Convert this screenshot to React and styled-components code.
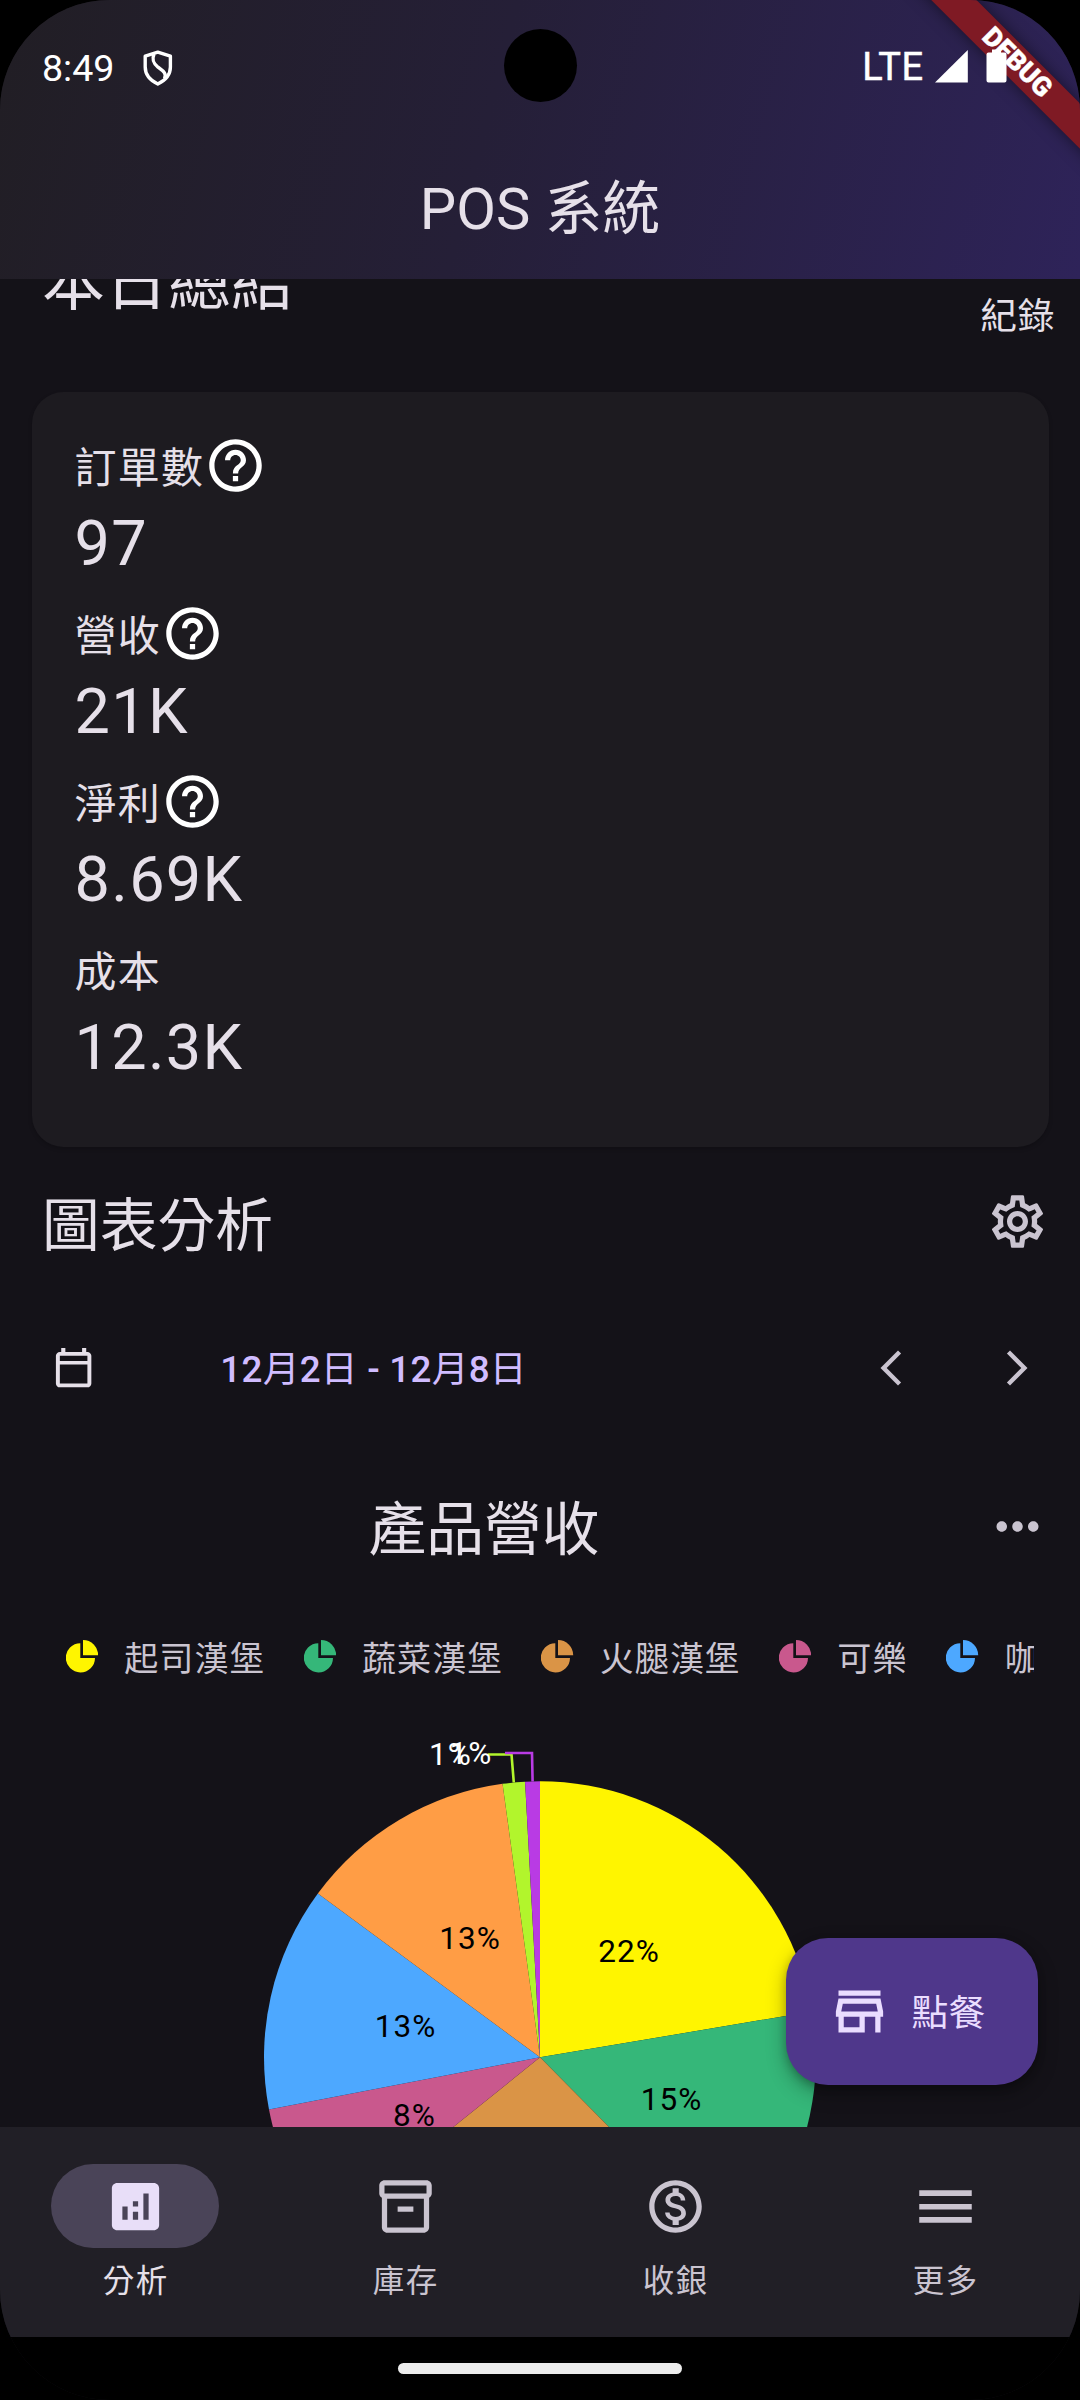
import React from "react";
import styled, { createGlobalStyle, css } from "styled-components";
import {
  MdHelpOutline,
  MdOutlineSettings,
  MdMoreHoriz,
  MdAnalytics,
  MdOutlineInventory2,
  MdOutlineMonetizationOn,
} from "react-icons/md";

const FONT = `Roboto, "Noto Sans CJK TC", sans-serif`;

const GlobalStyle = createGlobalStyle`
  html, body { margin: 0; padding: 0; background: #000; }
  * { box-sizing: border-box; }
  svg { display: block; flex-shrink: 0; }
`;

const Screen = styled.div`
  position: relative;
  display: flex;
  flex-direction: column;
  width: 1080px;
  height: 2400px;
  overflow: hidden;
  border-radius: 110px;
  background: #141218;
  color: #e6e0e9;
  font-family: ${FONT};
  font-weight: 400;
`;

const Header = styled.header`
  display: flex;
  flex-direction: column;
  flex: none;
  height: 279px;
  background: linear-gradient(104.5deg, #211e24 0%, #251f37 45%, #2e2359 100%);
`;

const StatusBar = styled.div`
  position: relative;
  z-index: 3;
  display: flex;
  justify-content: space-between;
  height: 136px;
  padding: 0 73.5px 0 42px;
  color: #fff;
`;

const StatusGroup = styled.div`
  display: flex;
  align-items: flex-start;
`;

const Clock = styled.span`
  padding-top: 45.5px;
  margin-right: 27.5px;
  font-size: 37.6px;
  line-height: 44px;
`;

const ShieldIcon = styled.svg`
  width: 32px;
  height: 38px;
  margin-top: 48.5px;
`;

const Network = styled.span`
  padding-top: 44.5px;
  margin-right: 11px;
  font-size: 38px;
  font-weight: 400;
  line-height: 44px;
  letter-spacing: 0.5px;
  -webkit-text-stroke: 0.5px #fff;
`;

const SignalIcon = styled.svg`
  width: 33px;
  height: 33px;
  margin: 49.5px 18px 0 0;
`;

const BatteryIcon = styled.svg`
  width: 21px;
  height: 34px;
  margin-top: 49px;
`;

const AppTitle = styled.h1`
  margin: 0;
  padding-top: 8px;
  font-size: 57.75px;
  font-weight: 400;
  line-height: 130px;
  text-align: center;
`;

const Cutout = styled.div`
  position: absolute;
  z-index: 4;
  top: 29px;
  left: 503.5px;
  width: 73px;
  height: 73px;
  border-radius: 50%;
  background: #000;
`;

const DebugBanner = styled.div`
  position: absolute;
  z-index: 2;
  top: 47.4px;
  left: 816.9px;
  width: 400px;
  height: 31.5px;
  transform: rotate(45deg);
  background: #7f1a24;
  box-shadow: 0 0 16px rgba(0, 0, 0, 0.5);
  color: #fff;
  font-size: 26.8px;
  font-weight: 900;
  line-height: 31.5px;
  text-align: center;
  -webkit-text-stroke: 0.4px #fff;
`;

const Content = styled.main`
  flex: none;
  height: 1848px;
  overflow: hidden;
`;

const SummaryHead = styled.div`
  display: flex;
  justify-content: space-between;
  height: 154.5px;
  margin-top: -42px;
  padding: 0 25px 0 42px;
`;

const SummaryTitle = styled.h2`
  margin: 0;
  font-size: 63px;
  font-weight: 400;
  line-height: 91px;
`;

const RecordsLink = styled.span`
  margin-top: 55px;
  font-size: 36.75px;
  line-height: 50px;
  letter-spacing: 0.6px;
`;

const Card = styled.section`
  height: 755.5px;
  margin: 0 31.5px;
  padding: 42.5px 42px 0 43px;
  border-radius: 31.5px;
  background: #1d1b20;
  box-shadow: 0 2px 4px rgba(0, 0, 0, 0.2);
`;

const Metric = styled.div`
  height: 168px;
`;

const MetricLabel = styled.div`
  display: flex;
  align-items: center;
  height: 63px;
  font-size: 42px;
  letter-spacing: 1.31px;

  span {
    padding-top: 7px;
    line-height: 54px;
  }
  svg {
    color: #fff;
  }
`;

const MetricValue = styled.div`
  margin-top: 5px;
  font-size: 63px;
  line-height: 84px;
  letter-spacing: 1.31px;
`;

const AnalysisHead = styled.div`
  display: flex;
  align-items: center;
  justify-content: space-between;
  height: 149px;
  padding: 0 31.5px 0 42px;

  > svg {
    color: #cac4d0;
  }
`;

const SectionTitle = styled.h2`
  margin: 0;
  padding-top: 9px;
  font-size: 57.75px;
  font-weight: 400;
  line-height: 76px;
`;

const DateRow = styled.div`
  display: flex;
  align-items: center;
  height: 144px;
  padding-left: 49.9px;
`;

const DateRange = styled.span`
  flex: 1;
  margin-left: 123.2px;
  padding-top: 3px;
  color: #d0bcff;
  font-size: 36.75px;
  font-weight: 500;
  line-height: 52px;
  letter-spacing: 0.26px;
`;

const DateUnit = styled.span`
  font-weight: 400;
`;

const IconButton = styled.span`
  display: flex;
  flex: none;
  align-items: center;
  justify-content: center;
  width: 126px;
  height: 126px;
  color: #cac4d0;
`;

const ChartHead = styled.div`
  display: flex;
  align-items: center;
  height: 173px;
`;

const ChartTitle = styled(SectionTitle)`
  flex: 1;
  padding: 6px 0 0 14px;
  text-align: center;
`;

const Legend = styled.div`
  display: flex;
  align-items: center;
  gap: 38.7px;
  height: 87px;
  margin: 0 46px;
  padding-left: 19.8px;
  overflow: hidden;
`;

const LegendItem = styled.div`
  display: flex;
  flex: none;
  align-items: center;
  gap: 26.1px;
  color: #cac4d0;
  font-size: 34.125px;
  letter-spacing: 1.05px;
  white-space: nowrap;

  span {
    padding-top: 4px;
    line-height: 50px;
  }
`;

const ChartCanvas = styled.svg`
  width: 1080px;
  height: 427px;
`;

const SliceLabel = styled.text`
  fill: ${(p) => (p.$outside ? "#fff" : "#000")};
  font-family: ${FONT};
  font-size: 31.5px;
  letter-spacing: 1.05px;
  text-anchor: middle;
`;

const OrderButton = styled.button`
  position: absolute;
  top: 1938px;
  left: 785.5px;
  display: flex;
  align-items: center;
  gap: 21px;
  width: 252.5px;
  height: 147px;
  padding: 0 0 0 42px;
  border: 0;
  border-radius: 42px;
  background: #4f378b;
  box-shadow: 0 8px 20px rgba(0, 0, 0, 0.3), 0 3px 8px rgba(0, 0, 0, 0.2);
  color: #eaddff;
  font-family: ${FONT};
  font-size: 36.75px;
  font-weight: 400;
  letter-spacing: 0.3px;

  span {
    padding-top: 5px;
    line-height: 50px;
  }
`;

const NavBar = styled.nav`
  display: flex;
  flex: none;
  height: 210px;
  background: #211f26;
`;

const NavItem = styled.div`
  display: flex;
  flex: 1;
  flex-direction: column;
  align-items: center;
  padding-top: 37px;
  color: ${(p) => (p.$active ? "#e6e0e9" : "#cac4d0")};
  font-size: 31.5px;
  line-height: 44px;
  letter-spacing: 1.31px;

  > span {
    padding-left: 1.3px;
  }
`;

const NavPill = styled.div`
  display: flex;
  align-items: center;
  justify-content: center;
  width: 168px;
  height: 84px;
  margin-bottom: 12px;
  border-radius: 42px;
  ${(p) =>
    p.$active &&
    css`
      background: #4a4458;
      color: #e8def8;
    `}
`;

const GestureArea = styled.div`
  display: flex;
  flex: none;
  align-items: center;
  justify-content: center;
  height: 63px;
  background: #000;
`;

const GestureHandle = styled.div`
  width: 284px;
  height: 11px;
  border-radius: 6px;
  background: #ececec;
`;

const CalendarIcon = () => (
  <svg width="47.25" height="47.25" viewBox="0 0 24 24" fill="currentColor" fillRule="evenodd">
    <path d="M18.4 4V2h-2.1v2H7.8V2H5.7v2H5c-1.1 0-2 .9-2 2v14c0 1.1.9 2 2 2h14c1.1 0 2-.9 2-2V6c0-1.1-.9-2-2-2zM5 6h14v2.6H5zM5 10.4h14V20H5z" />
  </svg>
);

const ChevronIcon = ({ d }) => (
  <svg width="42" height="42" viewBox="0 0 24 24" fill="currentColor">
    <path d={d} />
  </svg>
);

const LegendIcon = ({ color }) => (
  <svg width="32.3" height="32.3" viewBox="0 0 32.3 32.3" fill={color}>
    <path d="M14.3 3.2A14.6 14.6 0 1 0 29 17.9H14.3z" />
    <path d="M17 0A15.2 15.2 0 0 1 32.2 15.2H17z" />
  </svg>
);

const StoreIcon = () => (
  <svg width="63" height="63" viewBox="0 0 24 24" fill="currentColor">
    <path d="M18.36 9l.6 3H5.04l.6-3h12.72M20 4H4v2h16V4zm0 3H4l-1 5v2h1v6h10v-6h4v6h2v-6h1v-2l-1-5zM6 18v-4h6v4H6z" />
  </svg>
);

const MenuIcon = () => (
  <svg width="63" height="63" viewBox="0 0 24 24" fill="currentColor">
    <path d="M2 16v2.2h20V16zM2 11v2.1h20V11zM2 5.8V8h20V5.8z" />
  </svg>
);

const metrics = [
  { label: "訂單數", value: "97", help: true },
  { label: "營收", value: "21K", help: true },
  { label: "淨利", value: "8.69K", help: true },
  { label: "成本", value: "12.3K", help: false },
];

const legend = [
  { name: "起司漢堡", color: "#fff500" },
  { name: "蔬菜漢堡", color: "#35b779" },
  { name: "火腿漢堡", color: "#da9446" },
  { name: "可樂", color: "#c9588d" },
  { name: "咖啡", color: "#4da8ff" },
];

const CX = 540;
const CY = 357.3;
const R = 276;

const slices = [
  { from: 0, to: 80.45, color: "#fff500", label: "22%", x: 629, y: 262 },
  { from: 80.45, to: 135.3, color: "#35b779", label: "15%", x: 671.5, y: 410 },
  { from: 135.3, to: 231.2, color: "#da9446" },
  { from: 231.2, to: 259.1, color: "#c9588d", label: "8%", x: 414.5, y: 425.7 },
  { from: 259.1, to: 306.4, color: "#4da8ff", label: "13%", x: 405.5, y: 337 },
  { from: 306.4, to: 352.2, color: "#ff9d45", label: "13%", x: 470, y: 249 },
  { from: 352.2, to: 356.9, color: "#b2f52c" },
  { from: 356.9, to: 360, color: "#b93be4" },
];

const point = (deg) => {
  const a = (deg * Math.PI) / 180;
  return `${(CX + R * Math.sin(a)).toFixed(2)} ${(CY - R * Math.cos(a)).toFixed(2)}`;
};

const slicePath = ({ from, to }) =>
  `M${CX} ${CY}L${point(from)}A${R} ${R} 0 0 1 ${point(to)}Z`;

const RevenuePie = () => (
  <ChartCanvas viewBox="0 0 1080 427">
    {slices.map((s) => (
      <path key={s.from} d={slicePath(s)} fill={s.color} />
    ))}
    <path d="M488 54.5H511.5L513.8 82.5" fill="none" stroke="#b2f52c" strokeWidth="2.6" />
    <path d="M505 53H532L532.6 81.5" fill="none" stroke="#b93be4" strokeWidth="2.6" />
    {slices
      .filter((s) => s.label)
      .map((s) => (
        <SliceLabel key={s.from} x={s.x} y={s.y}>
          {s.label}
        </SliceLabel>
      ))}
    <SliceLabel $outside x="450.5" y="65">
      1%
    </SliceLabel>
    <SliceLabel $outside x="471" y="64">
      1%
    </SliceLabel>
  </ChartCanvas>
);

const navItems = [
  { label: "分析", icon: <MdAnalytics size={63} />, active: true },
  { label: "庫存", icon: <MdOutlineInventory2 size={63} /> },
  { label: "收銀", icon: <MdOutlineMonetizationOn size={63} /> },
  { label: "更多", icon: <MenuIcon /> },
];

export default function App() {
  return (
    <>
      <GlobalStyle />
      <Screen>
        <Header>
          <StatusBar>
            <StatusGroup>
              <Clock>8:49</Clock>
              <ShieldIcon viewBox="0 0 32 38" fill="none" stroke="#fff" strokeWidth="3.4" strokeLinejoin="round">
                <path d="M15.800 3.200L3.200 7.200V18C3.200 25.500 8.500 31.500 15.800 35C23.100 31.500 28.400 25.500 28.400 18V7.200Z" />
                <path d="M12 5C9.500 11 11.500 14.500 16 18.200C21 22 25 24 22.500 29.500" />
              </ShieldIcon>
            </StatusGroup>
            <StatusGroup>
              <Network>LTE</Network>
              <SignalIcon viewBox="0 0 33 33" fill="#fff">
                <path d="M0 32.500L32.800 0V32.500z" />
              </SignalIcon>
              <BatteryIcon viewBox="0 0 21 34" fill="#fff">
                <path d="M6 .5H15V3.500H18.500Q20.500 3.500 20.500 5.500V31.500Q20.500 33.500 18.500 33.500H2.500Q.5 33.500 .5 31.500V5.500Q.5 3.500 2.500 3.500H6z" />
              </BatteryIcon>
            </StatusGroup>
          </StatusBar>
          <AppTitle>POS 系統</AppTitle>
        </Header>

        <Content>
          <SummaryHead>
            <SummaryTitle>本日總結</SummaryTitle>
            <RecordsLink>紀錄</RecordsLink>
          </SummaryHead>

          <Card>
            {metrics.map((m) => (
              <Metric key={m.label}>
                <MetricLabel>
                  <span>{m.label}</span>
                  {m.help && <MdHelpOutline size={63} />}
                </MetricLabel>
                <MetricValue>{m.value}</MetricValue>
              </Metric>
            ))}
          </Card>

          <AnalysisHead>
            <SectionTitle>圖表分析</SectionTitle>
            <MdOutlineSettings size={63} />
          </AnalysisHead>

          <DateRow>
            <CalendarIcon />
            <DateRange>
              12<DateUnit>月</DateUnit>2<DateUnit>日</DateUnit> - 12<DateUnit>月</DateUnit>8<DateUnit>日</DateUnit>
            </DateRange>
            <IconButton>
              <ChevronIcon d="M17.770 3.770L16 2 6 12l10 10 1.770-1.770L9.540 12z" />
            </IconButton>
            <IconButton>
              <ChevronIcon d="M6.230 20.230L8 22l10-10L8 2 6.230 3.770 14.460 12z" />
            </IconButton>
          </DateRow>

          <ChartHead>
            <ChartTitle>產品營收</ChartTitle>
            <IconButton>
              <MdMoreHoriz size={63} />
            </IconButton>
          </ChartHead>

          <Legend>
            {legend.map((l) => (
              <LegendItem key={l.name}>
                <LegendIcon color={l.color} />
                <span>{l.name}</span>
              </LegendItem>
            ))}
          </Legend>

          <RevenuePie />
        </Content>

        <OrderButton>
          <StoreIcon />
          <span>點餐</span>
        </OrderButton>

        <NavBar>
          {navItems.map((n) => (
            <NavItem key={n.label} $active={n.active}>
              <NavPill $active={n.active}>{n.icon}</NavPill>
              <span>{n.label}</span>
            </NavItem>
          ))}
        </NavBar>

        <GestureArea>
          <GestureHandle />
        </GestureArea>

        <Cutout />
        <DebugBanner>DEBUG</DebugBanner>
      </Screen>
    </>
  );
}
